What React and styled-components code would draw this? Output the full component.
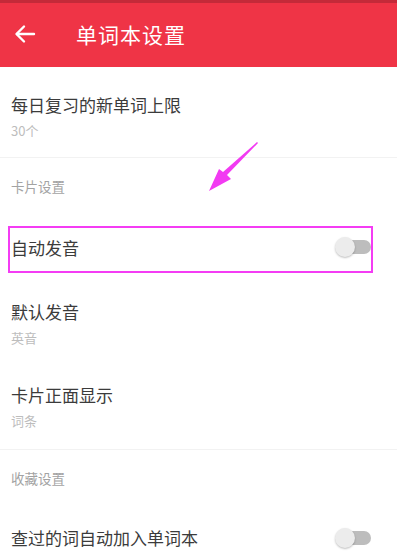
import React from 'react'
import styled, { createGlobalStyle } from 'styled-components'

const Global = createGlobalStyle`
  body {
    margin: 0;
    background: #fff;
    font-family: "Noto Sans CJK SC", "Noto Sans", sans-serif;
  }
`

const Page = styled.div`
  position: relative;
  width: 397px;
  height: 558px;
  overflow: hidden;
  background: #fff;
`

const StatusBar = styled.div`
  height: 3px;
  background: #c42a39;
`

const Header = styled.header`
  height: 64px;
  background: #ef3446;
  display: flex;
  align-items: center;
  padding-left: 13px;
  gap: 39px;
`

const BackButton = styled.div`
  width: 24px;
  height: 24px;
  display: flex;
  align-items: center;
  justify-content: center;
  margin-top: -2px;
`

const Title = styled.h1`
  margin: 0;
  margin-top: -2px;
  font-size: 21px;
  font-weight: 400;
  color: #fff;
  letter-spacing: 1px;
`

const Row = styled.div`
  position: relative;
  padding: ${p => p.$top || 22}px 26px ${p => p.$bottom || 15}px 11px;
  border-bottom: ${p => (p.$divider ? '1px solid #f2f2f2' : 'none')};
`

const RowTitle = styled.div`
  font-size: 17px;
  line-height: 24px;
  color: #3b3b3b;
`

const RowSub = styled.div`
  margin-top: 5px;
  font-size: 13px;
  line-height: 18px;
  color: #bdbdbd;
`

const Section = styled.div`
  height: ${p => p.$height || 60}px;
  box-sizing: border-box;
  padding: ${p => p.$top || 20}px 11px 0;
  font-size: 13.5px;
  line-height: 20px;
  color: #a3a3a3;
`

const SwitchRow = styled.div`
  position: relative;
  height: 60px;
  display: flex;
  align-items: center;
  justify-content: space-between;
  padding: 0 26px 0 11px;
`

const Track = styled.div`
  position: relative;
  width: 34px;
  height: 14px;
  border-radius: 7px;
  background: #bdbdbd;
  margin-top: ${p => p.$offset || 0}px;
`

const Thumb = styled.div`
  position: absolute;
  left: -2px;
  top: -3px;
  width: 20px;
  height: 20px;
  border-radius: 50%;
  background: #ececec;
  box-shadow: 0 1px 2px rgba(0, 0, 0, 0.25);
`

const Highlight = styled.div`
  position: absolute;
  left: 8px;
  right: 24px;
  top: 8px;
  bottom: 5px;
  border: 2px solid #f43cf4;
  pointer-events: none;
`

const Arrow = styled.svg`
  position: absolute;
  left: 200px;
  top: 135px;
`

const Switch = ({ offset }) => (
  <Track $offset={offset}>
    <Thumb />
  </Track>
)

export default function App() {
  return (
    <Page>
      <Global />
      <StatusBar />
      <Header>
        <BackButton>
          <svg width="22" height="20" viewBox="0 0 22 20" fill="none" stroke="#fff" strokeWidth="2.4" strokeLinecap="round" strokeLinejoin="round">
            <path d="M20 10H3" />
            <path d="M10 2.5L2.5 10L10 17.5" />
          </svg>
        </BackButton>
        <Title>单词本设置</Title>
      </Header>

      <Row $top={26} $bottom={17} $divider>
        <RowTitle>每日复习的新单词上限</RowTitle>
        <RowSub>30个</RowSub>
      </Row>

      <Section $top={18}>卡片设置</Section>

      <SwitchRow>
        <RowTitle>自动发音</RowTitle>
        <Switch offset={-3} />
        <Highlight />
      </SwitchRow>

      <Row $top={22} $bottom={14}>
        <RowTitle>默认发音</RowTitle>
        <RowSub>英音</RowSub>
      </Row>

      <Row $top={22} $bottom={19} $divider>
        <RowTitle>卡片正面显示</RowTitle>
        <RowSub>词条</RowSub>
      </Row>

      <Section $top={18} $height={58}>收藏设置</Section>

      <SwitchRow>
        <RowTitle>查过的词自动加入单词本</RowTitle>
        <Switch />
      </SwitchRow>

      <Arrow width="64" height="62" viewBox="0 0 64 62">
        <path d="M57 7 L58 8 L27 40 L31 44 L9 56 L19 34 L23 37 Z" fill="#f23af2" />
      </Arrow>
    </Page>
  )
}
